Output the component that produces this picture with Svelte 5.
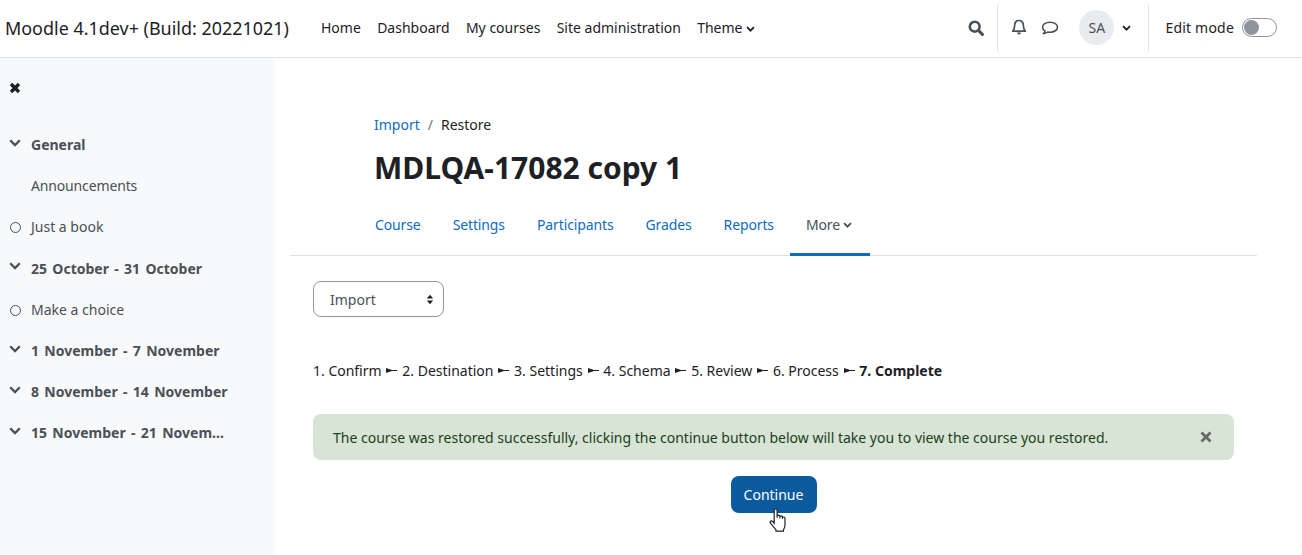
<script>
  const nav = ['Home', 'Dashboard', 'My courses', 'Site administration'];
  const tabs = ['Course', 'Settings', 'Participants', 'Grades', 'Reports'];
  const steps = ['1. Confirm', '2. Destination', '3. Settings', '4. Schema', '5. Review', '6. Process'];
  const side = [
    { t: 'General', k: 'sec' },
    { t: 'Announcements', k: 'plain' },
    { t: 'Just a book', k: 'act' },
    { t: '25 October - 31 October', k: 'sec' },
    { t: 'Make a choice', k: 'act' },
    { t: '1 November - 7 November', k: 'sec' },
    { t: '8 November - 14 November', k: 'sec' },
    { t: '15 November - 21 Novem...', k: 'sec' }
  ];
</script>

<div class="page">
  <header class="top">
    <div class="brand">Moodle 4.1dev+ (Build: 20221021)</div>
    <nav class="mainnav">
      {#each nav as n}<span>{n}</span>{/each}
      <span class="theme">Theme <svg class="chev" viewBox="0 0 10 7" width="9" height="6"><path d="M1 1.300l4 4 4-4" fill="none" stroke="currentColor" stroke-width="2.200"/></svg></span>
    </nav>
    <div class="tools">
      <svg class="search" viewBox="0 0 16 16" width="16" height="16"><circle cx="6.700" cy="6.700" r="4.900" fill="none" stroke="#495057" stroke-width="2.600"/><path d="M10.400 10.400l4 4" stroke="#495057" stroke-width="3" stroke-linecap="round"/></svg>
      <div class="sep first"></div>
      <svg class="bell" viewBox="0 0 16 17" width="16" height="17"><path d="M8 1.500c-2.800 0-4.300 2.100-4.300 4.700 0 3.200-.7 4.500-2 6h12.600c-1.300-1.500-2-2.800-2-6 0-2.600-1.500-4.700-4.300-4.700z" fill="none" stroke="#495057" stroke-width="1.700" stroke-linejoin="round"/><path d="M6 13.400a2 2 0 0 0 4 0z" fill="#495057"/></svg>
      <svg class="chat" viewBox="0 0 18 16" width="18" height="16"><path d="M9 2.200c-4.200 0-7.500 2.200-7.500 5 0 1.500 1 2.900 2.500 3.800-.2 1-.8 1.900-1.700 2.700 1.800-.1 3.300-.8 4.400-1.700.7.100 1.500.2 2.300.2 4.200 0 7.500-2.200 7.500-5s-3.300-5-7.500-5z" fill="none" stroke="#495057" stroke-width="1.600" stroke-linejoin="round"/></svg>
      <div class="avatar">SA</div>
      <svg class="userchev" viewBox="0 0 10 7" width="9" height="6"><path d="M1 1.300l4 4 4-4" fill="none" stroke="#1d2125" stroke-width="2.200"/></svg>
      <div class="sep second"></div>
      <span class="edit">Edit mode</span>
      <div class="switch"><div class="knob"></div></div>
    </div>
  </header>

  <div class="body">
    <aside class="drawer">
      <svg class="close" viewBox="0 0 12 12" width="12" height="12"><path d="M2 2l8 8M10 2l-8 8" stroke="#1d2125" stroke-width="3.400"/></svg>
      <ul>
        {#each side as s}
          <li class={s.k}>
            {#if s.k === 'sec'}
              <svg class="marker" viewBox="0 0 12 8" width="12" height="8"><path d="M1.200 1.200L6 6l4.800-4.800" fill="none" stroke="#495057" stroke-width="2.300"/></svg>
            {:else if s.k === 'act'}
              <span class="ring"></span>
            {:else}
              <span class="blank"></span>
            {/if}
            <span>{s.t}</span>
          </li>
        {/each}
      </ul>
    </aside>

    <main class="main">
      <div class="head">
        <div class="crumbs"><a href="#a">Import</a><span class="slash">/</span><span>Restore</span></div>
        <h1>MDLQA-17082 copy 1</h1>
      </div>
      <div class="tabs">
        {#each tabs as t}<a href="#a" class="tab">{t}</a>{/each}
        <span class="tab more">More <svg class="chev" viewBox="0 0 10 7" width="9" height="6"><path d="M1 1.300l4 4 4-4" fill="none" stroke="currentColor" stroke-width="2.200"/></svg></span>
      </div>
      <div class="content">
        <div class="select">
          <span>Import</span>
          <svg viewBox="0 0 8 12" width="8" height="11"><path d="M4 .8L7.500 4.800H.5zM4 11.200L.5 7.200h7z" fill="#1d2125"/></svg>
        </div>
        <div class="steps">
          {#each steps as s}<span>{s}</span><svg class="arr" viewBox="0 0 11 5" width="11" height="5"><path d="M0 0L6 2H11V3H6L0 5z" fill="#1d2125"/></svg>{/each}<b>7. Complete</b>
        </div>
        <div class="alert">
          <span>The course was restored successfully, clicking the continue button below will take you to view the course you restored.</span>
          <svg viewBox="0 0 12 12" width="12" height="12"><path d="M1.500 1.500l9 9M10.500 1.500l-9 9" stroke="#666a66" stroke-width="2.800"/></svg>
        </div>
        <div class="cta">
          <div class="btn">Continue
            <svg class="hand" viewBox="1 0.500 16 22" width="18" height="24"><path d="M5.500 14.500V2.800c0-2.100 2.700-2.100 2.700 0v6.700-1.300c0-1.600 2.500-1.600 2.500 0v1.600-.9c0-1.500 2.400-1.500 2.400 0v1.400-.5c0-1.400 2.300-1.400 2.300 0v6.200c0 2.500-1 3.200-1.400 4.700v1H7.200v-1c-.8-1.600-2.600-3.200-5-6.100-1.200-1.500.6-3 2-1.700z" fill="#fff" stroke="#1d2125" stroke-width="1.100"/></svg>
          </div>
        </div>
      </div>
    </main>
  </div>
</div>

<style>
  :global(body) { margin: 0; background: #fff; }
  .page { width: 1302px; height: 555px; overflow: hidden; font-family: "Noto Sans", "Open Sans", sans-serif; font-size: 14px; color: #1d2125; display: flex; flex-direction: column; }
  .top { height: 57px; flex: none; border-bottom: 1px solid #dee2e6; display: flex; align-items: center; padding-left: 5px; }
  .brand { font-size: 17.950px; width: 316px; flex: none; line-height: 24px; margin-top: -1px; }
  .mainnav { display: flex; gap: 16.300px; margin-top: -2px; }
  .mainnav span { white-space: nowrap; }
  .chev { margin-left: 0; vertical-align: 1px; }
  .tools { margin-left: auto; display: flex; align-items: center; height: 46px; margin-top: -2px; }
  .search { margin-right: 13px; }
  .sep { width: 1px; height: 46px; background: #dee2e6; }
  .bell { margin-left: 13px; }
  .chat { margin-left: 14px; }
  .avatar { width: 35px; height: 35px; border-radius: 50%; background: #e9ecef; display: flex; align-items: center; justify-content: center; margin-left: 20px; color: #495057; }
  .userchev { margin-left: 8px; }
  .sep.second { margin-left: 17px; }
  .edit { margin-left: 16px; letter-spacing: 0.2px; }
  .switch { width: 35px; height: 19px; box-sizing: border-box; border: 1px solid #8f959e; border-radius: 10px; margin: 0 25px 0 8px; padding: 1px; }
  .knob { width: 15px; height: 15px; border-radius: 50%; background: #8f959e; }

  .body { flex: 1; display: flex; min-height: 0; }
  .drawer { width: 274px; flex: none; background: #f8f9fa; padding: 24px 0 0 9px; box-sizing: border-box; }
  .close { display: block; margin-bottom: 30px; }
  ul { list-style: none; margin: 0; padding: 0; }
  li { height: 41.200px; display: flex; align-items: center; color: #495057; white-space: nowrap; }
  li.sec { font-weight: 700; word-spacing: 1.700px; }
  li.plain { letter-spacing: -0.150px; }
  .marker { margin-right: 10px; flex: none; position: relative; top: -2px; }
  .ring { width: 11px; height: 11px; box-sizing: border-box; border: 1.500px solid #495057; border-radius: 50%; margin: 2px 10px 0 1px; flex: none; }
  .blank { width: 22px; flex: none; }

  .main { flex: 1; padding: 0 45px 0 16px; min-width: 0; }
  .head { padding: 57px 0 0 84px; }
  .crumbs { display: flex; gap: 8px; line-height: 20px; }
  .crumbs a { color: #0f6cbf; text-decoration: none; }
  .slash { color: #6a737b; }
  h1 { margin: 15px 0 0; font-size: 30px; line-height: 36px; font-weight: 700; }
  .tabs { display: flex; margin-top: 14px; padding-left: 69px; height: 56px; box-sizing: border-box; border-bottom: 1px solid #dee2e6; }
  .tab { padding: 0 16px 8px; height: 56px; box-sizing: border-box; display: flex; align-items: center; gap: 3px; color: #0f6cbf; text-decoration: none; white-space: nowrap; letter-spacing: -0.120px; }
  .more { color: #495057; border-bottom: 3px solid #0f6cbf; padding-bottom: 5px; width: 80px; }
  .more .chev { margin: 1px 0 0; }
  .content { padding: 25px 23px 0; }
  .select { width: 131px; height: 36px; box-sizing: border-box; border: 1px solid #8f959e; border-radius: 8px; display: flex; align-items: center; justify-content: space-between; padding: 0 9px 0 16px; color: #495057; }
  .steps { margin-top: 43px; line-height: 21px; display: flex; gap: 4.800px; white-space: nowrap; }
  .arr { align-self: center; flex: none; }
  .steps b { font-weight: 700; }
  .alert { margin-top: 33px; height: 46px; box-sizing: border-box; background: #d7e4d6; border-radius: 8px; display: flex; align-items: center; justify-content: space-between; padding: 0 22px 0 20px; color: #1c3f1a; }
  .cta { display: flex; justify-content: center; margin-top: 16px; }
  .btn { position: relative; width: 86px; height: 37px; box-sizing: border-box; background: #0a5a9e; border-radius: 8px; color: #fff; display: flex; align-items: center; justify-content: center; }
  .hand { position: absolute; left: 38px; top: 32px; }
</style>
